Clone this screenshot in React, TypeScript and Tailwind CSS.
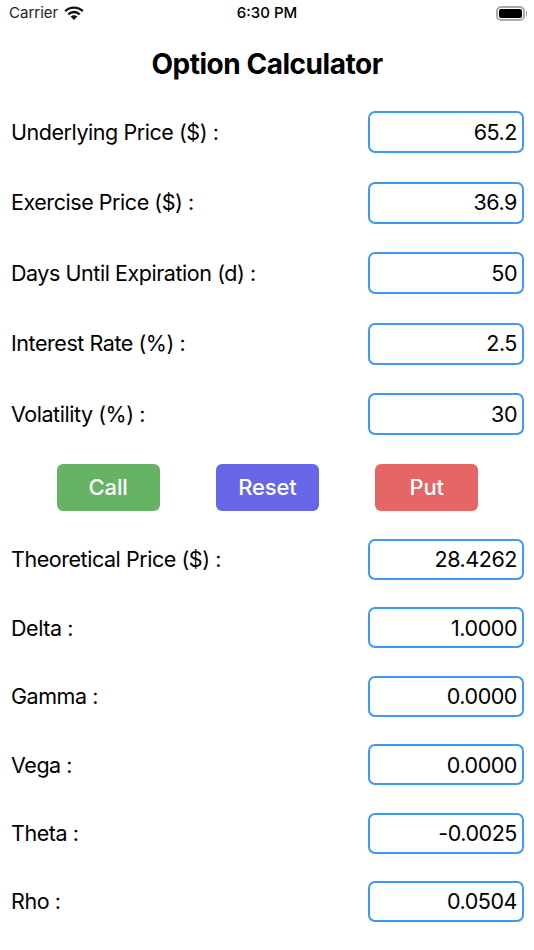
const inputs = [
  { label: "Underlying Price ($) :", value: "65.2" },
  { label: "Exercise Price ($) :", value: "36.9" },
  { label: "Days Until Expiration (d) :", value: "50" },
  { label: "Interest Rate (%) :", value: "2.5" },
  { label: "Volatility (%) :", value: "30" },
]

const outputs = [
  { label: "Theoretical Price ($) :", value: "28.4262" },
  { label: "Delta :", value: "1.0000" },
  { label: "Gamma :", value: "0.0000" },
  { label: "Vega :", value: "0.0000" },
  { label: "Theta :", value: "-0.0025" },
  { label: "Rho :", value: "0.0504" },
]

const buttons = [
  { text: "Call", className: "bg-[#66b366]" },
  { text: "Reset", className: "bg-[#6666e6]" },
  { text: "Put", className: "bg-[#e66666]" },
]

function Row({ label, value, height }: { label: string; value: string; height: string }) {
  return (
    <div className={`flex items-center justify-between pl-[11px] pr-[10px] text-[21.5px] tracking-[-0.45px] ${height}`}>
      <span>{label}</span>
      <div className="flex h-full w-[156px] items-center justify-end rounded-[7px] border-2 border-[#3f97f9] pr-[5px]">
        {value}
      </div>
    </div>
  )
}

export default function App() {
  return (
    <main className="flex h-[950px] w-[534px] flex-col overflow-hidden bg-white font-['Inter','Noto_Sans',sans-serif] text-black">
      <div className="relative flex h-[27px] items-center justify-between pl-[9px] pr-[7px] text-[15px]">
        <div className="flex items-center gap-[6px]">
          <span className="text-[#222]">Carrier</span>
          <svg width="20" height="15" viewBox="0 0 20 15" fill="none">
            <path d="M1.2 5.2A12.5 12.5 0 0 1 18.8 5.2" stroke="#111" strokeWidth="2.4" />
            <path d="M4.350 8.350A8 8 0 0 1 15.650 8.350" stroke="#111" strokeWidth="2.4" />
            <path d="M10 14L6.600 10.600A4.800 4.800 0 0 1 13.400 10.600Z" fill="#111" />
          </svg>
        </div>
        <span className="absolute left-0 right-0 text-center font-medium">6:30 PM</span>
        <div className="mb-[1px] flex items-center">
          <div className="h-[15px] w-[29px] rounded-[5px] border-2 border-[#aaa] p-[1px]">
            <div className="h-full w-full rounded-[2px] bg-black" />
          </div>
          <div className="ml-[1px] h-[5px] w-[1.500px] rounded-r-full bg-[#999]" />
        </div>
      </div>

      <h1 className="mt-[17px] h-[40px] text-center text-[28px] leading-[40px] font-bold tracking-[-0.47px]">Option Calculator</h1>

      <div className="mt-[27px] flex flex-col gap-[28.500px]">
        {inputs.map((r) => (
          <Row key={r.label} label={r.label} value={r.value} height="h-[42px]" />
        ))}
      </div>

      <div className="mt-[29px] flex gap-[56px] pl-[56.500px]">
        {buttons.map((b) => (
          <button key={b.text} className={`h-[47px] w-[103.300px] rounded-[6px] text-[22px] font-medium tracking-[-0.1px] text-white ${b.className}`}>
            {b.text}
          </button>
        ))}
      </div>

      <div className="mt-[28px] flex flex-col gap-[27.400px]">
        {outputs.map((r) => (
          <Row key={r.label} label={r.label} value={r.value} height="h-[41px]" />
        ))}
      </div>
    </main>
  )
}
